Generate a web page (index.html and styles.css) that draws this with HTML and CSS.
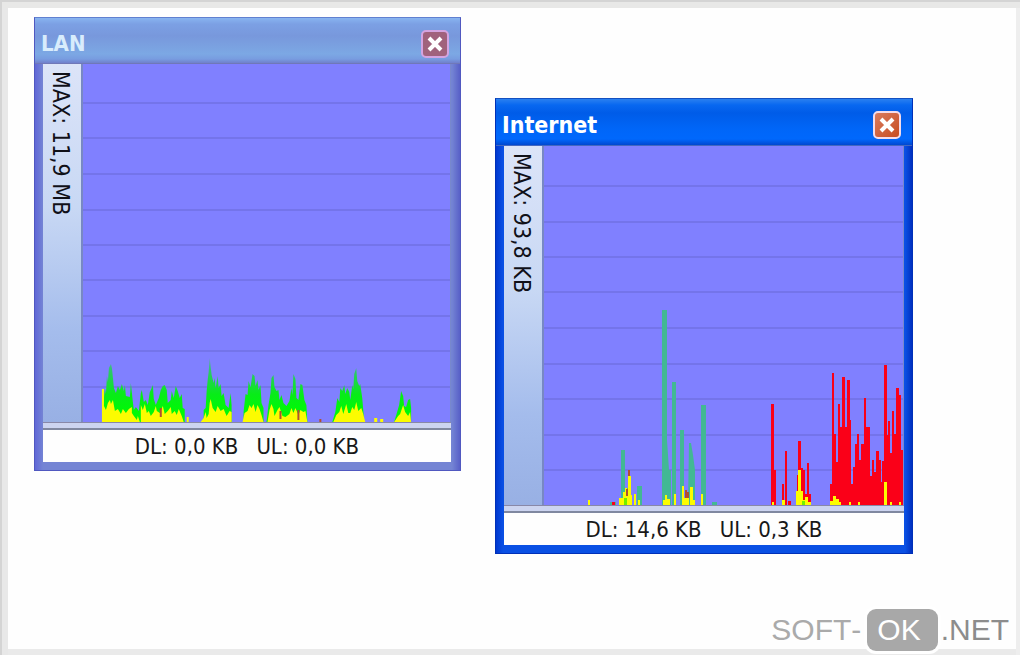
FILE: index.html
```
<!DOCTYPE html>
<html lang="en">
<head>
<meta charset="utf-8">
<title>Network traffic</title>
<link rel="stylesheet" href="styles.css">
</head>
<body>
<main class="desktop">
  <section class="window window-lan inactive" aria-label="LAN">
    <header class="titlebar">
      <h2 class="title">LAN</h2>
      <button class="close" type="button" aria-label="Close LAN">
        <svg viewBox="0 0 20 20" aria-hidden="true"><path d="M4 4L16 16M16 4L4 16"/></svg>
      </button>
    </header>
    <div class="monitor">
      <div class="scale">MAX: 11,9 MB</div>
      <svg class="chart" viewBox="83 64 368 358" preserveAspectRatio="none" role="img" aria-label="LAN traffic graph">
        <defs>
          <linearGradient id="lan-green" gradientUnits="userSpaceOnUse" x1="0" y1="358" x2="0" y2="410">
            <stop offset="0" stop-color="#64a0b4"/><stop offset=".25" stop-color="#2cc868"/><stop offset=".7" stop-color="#08ec18"/><stop offset="1" stop-color="#00f808"/>
          </linearGradient>
        </defs>
        <path class="grid" d="M83 103H451M83 138H451M83 174H451M83 210H451M83 245H451M83 280H451M83 316H451M83 351H451M83 387H451"/>
        <path fill="url(#lan-green)" d="M103 422V408L105 388L106 394L107 376L108 382L109 368L111 364L112 368L114 388L116 393L118 386L120 390L122 384L124 391L125 385L126 396L130 397L131 383L133 402L134 410L136 407L139 411L141 393L142 390L144 402L146 400L148 405L150 392L151 390L153 385L154 399L156 405L159 398L161 390L163 386L165 385L167 390L168 403L171 400L172 391L174 398L176 386L178 391L180 398L182 394L183 408L185 409V422Z
          M204 422V410L206 408L207 391L208 380L209 372L210 358L212 375L214 383L215 378L216 388L218 376L219 388L221 384L222 396L224 393L226 405L229 408L231 393L232 405V422Z
          M244 422V412L246 394L248 395L249 381L251 387L253 374L255 376L256 386L258 380L259 390L261 385L262 403L264 408V422Z
          M267 422L269 405L271 393L272 378L274 375L275 387L277 391L279 390L280 400L282 395L284 403L287 406L290 401L292 388L293 395L294 374L296 379L297 398L299 400L301 384L303 385L305 400L307 405L308 422Z
          M333 422L336 412L338 398L340 402L341 388L343 391L345 385L346 394L348 388L350 392L351 400L353 385L354 389L355 374L357 368L358 381L360 386L361 384L363 398L364 410L365 422Z
          M395 422L398 412L400 405L402 391L404 396L405 406L407 407L409 400L411 399L412 408V422Z"/>
        <path class="both" d="M102 422V389H104V406L106 410L108 403L110 400L111 404L113 400L115 411L118 409L121 414L123 409L126 413L129 409L132 407V413L134 416L137 420L138 416L140 422Z
          M141 422V405L143 410L145 404L147 413L149 411L151 416L154 412L156 406L157 411L160 413L163 406L165 414L168 411L171 407L172 414L175 411L177 415L179 409L182 416L184 422Z
          M187 422V417H189V422Z
          M201 422L204 418L206 412L207 418L209 414L210 403L211 399L213 408L216 412L218 406L221 411L224 409L227 416L230 411L232 412V422Z
          M243 422L245 413L248 411L250 405L252 408L254 404L256 412L258 405L260 409L262 415L264 422Z
          M268 422L270 410L272 404L274 409L275 416L278 410L280 407L283 416L286 417L290 414L292 408L294 413L296 408L299 415L301 410L304 412L306 411L308 422Z
          M334 422L337 415L340 412L342 406L344 414L347 404L349 413L351 413L353 407L355 410L357 402L359 411L362 408L364 414L366 422Z
          M375 422V418H378V422Z M381 422V419H384V422Z
          M395 422L399 416L401 414L404 405L406 412L409 416L411 412L412 422Z"/>
        <path class="stray" d="M161 417V408M281 419V411M299 420V410M321 422V419"/>
      </svg>
    </div>
    <footer class="status"><span>DL: 0,0 KB</span><span>UL: 0,0 KB</span></footer>
  </section>

  <section class="window window-internet" aria-label="Internet">
    <header class="titlebar">
      <h2 class="title">Internet</h2>
      <button class="close" type="button" aria-label="Close Internet">
        <svg viewBox="0 0 20 20" aria-hidden="true"><path d="M4 4L16 16M16 4L4 16"/></svg>
      </button>
    </header>
    <div class="monitor">
      <div class="scale">MAX: 93,8 KB</div>
      <svg class="chart" viewBox="544 146 359 359" preserveAspectRatio="none" role="img" aria-label="Internet traffic graph">
        <path class="grid" d="M544 186H904M544 222H904M544 257H904M544 292H904M544 328H904M544 364H904M544 399H904M544 435H904M544 470H904"/>
        <path class="down" d="M621 505V450H625V488H628V505Z M637 505V486H642V505Z M662 505V310H667V440L669 470H671V505Z M672 505V382H676V505Z M680 505V430H684V505Z M688 505L689 443H691L693 455L695 470V505Z M701 505V405H706V505Z M610 505V502H616V505Z M712 505V502H717V505Z"/>
        <path class="up" d="M771 505V404H774V470H776V505Z M782 505V484H784V505Z M785 505V451H787V505Z M788 505V501H791V505Z
          M797 505V475H798V441H801V468H803V505Z M803 505V470H805V494H807V463H809V494H811V505Z
          M830 505V484H832V373H834V434H836V462H838V404H840V427H842V377H845V427H847V380H850V420H851V484H853V467H855V444H857V434H859V460H861V444H864V398H866V427H870V476H872V460H874V472H876V451H879V460H881V482H882V461H884V365H887V435H888V421H890V453H892V411H894V434H896V388H899V395H901V450H903V505Z M612 505V502H615V505Z"/>
        <path class="both" d="M588 505V500H590V505Z M619 505V498H623V492H625V488H627V496H628V476H631V495H632V505Z M634 505V494H636V505Z M638 505V500H640V505Z
          M663 505V500H665V495H667V499H670V505Z M674 505V494H676V505Z M682 505V486H684V498H689V505Z M690 505V487H693V500H695V505Z M701 505V494H703V505Z
          M772 505V502H774V505Z M782 505V500H785V505Z M796 505V491H798V470H801V491H803V500H805V497H808V502H811V505Z
          M830 505V501H833V496H836V499H839V502H841V505Z M849 505V502H851V505Z M858 505V502H860V505Z M884 505V482H887V505Z M890 505V502H892V505Z M899 505V502H901V505Z"/>
        <path class="stray" d="M629 476V470M627 496V489M686 498V490M688 498V492"/>
        <path class="bright" d="M624 505V498H627V505Z M802 505V501H805V505Z"/>
      </svg>
    </div>
    <footer class="status"><span>DL: 14,6 KB</span><span>UL: 0,3 KB</span></footer>
  </section>

  <a class="brand" href="#"><span>SOFT-</span><span class="brand-pill">OK</span><span class="brand-end">.NET</span></a>
</main>
</body>
</html>
```
FILE: styles.css
```
* { box-sizing: border-box; }

body {
  margin: 0;
  font-family: "DejaVu Sans Condensed", "Noto Sans", sans-serif;
}

.desktop {
  position: relative;
  min-height: 100vh;
  background: #fefefe;
  box-shadow: inset 0 2px #d4d4d4, inset 2px 0 #d4d4d4, inset 0 8px #e8e8e7, inset 8px 0 #e8e8e8, inset -4px 0 #eeeeee, inset 0 -6px #eaeaea;
}

.window {
  position: absolute;
  display: flex;
  flex-direction: column;
  border: 1px solid #0030b8;
  border-top-color: #1450c0;
  background: linear-gradient(to right, #0038d0, #0a50e4 7px, #0a50e4 calc(100% - 7px), #0030c0);
}

.window-lan { left: 34px; top: 17px; width: 427px; }
.window-internet { left: 495px; top: 98px; width: 418px; padding: 0 8px 8px; }

.window.inactive {
  padding: 0 9px 8px 8px;
  border-color: #5058c0;
  border-top-color: #6080d0;
  background: linear-gradient(to right, #6068d8, #7484d4 8px, #7484d4 calc(100% - 8px), #5860c8);
}

.titlebar {
  display: flex;
  align-items: center;
  justify-content: space-between;
  height: 47px;
  margin: 0 -8px;
  padding: 6px 11px 0 6px;
  background: linear-gradient(#2a80f0, #0868f0 6px, #005ce8 14px, #0066f8 30px, #0068fc 40px, #0048d0);
  border-bottom: 1px solid #4468c0;
}

.inactive .titlebar {
  height: 46px;
  margin: 0 -9px 0 -8px;
  background: linear-gradient(#88b4f0, #7ca0e4 6px, #7898dc 18px, #7ca8e4 36px, #789ce0 41px, #7080cc);
  border-bottom-color: #7078b8;
}

.title {
  margin: 0;
  color: #ffffff;
  font-size: 23px;
  line-height: 28px;
  font-weight: bold;
}

.inactive .title {
  color: #d8ecfc;
  font-size: 22px;
}

.close {
  width: 28px;
  height: 28px;
  padding: 2px;
  border: 2px solid #f4dcea;
  border-radius: 5px;
  background: linear-gradient(135deg, #d87c60, #c84c20);
}

.close svg {
  display: block;
  width: 100%;
  height: 100%;
  fill: none;
  stroke: #ffffff;
  stroke-width: 4;
}

.inactive .close {
  border-color: #d4a4e0;
  background: #a0627c;
}

.monitor {
  display: flex;
  border-bottom: 1px solid #8888a8;
  background: #8080ff;
}

.scale {
  flex: none;
  width: 40px;
  padding: 7px 0;
  border-right: 2px solid #7888c4;
  background: linear-gradient(#dce4f8, #c8d8f4 40%, #a4bcec 75%, #98b0e4);
  color: #101018;
  font-size: 23px;
  line-height: 40px;
  writing-mode: vertical-rl;
}

.chart {
  display: block;
  flex: 1;
  min-width: 0;
  height: 359px;
  border-right: 1px solid #7888cc;
}

.inactive .chart { height: 358px; }

.grid { fill: none; stroke: #7474ea; stroke-width: 2; }
.down { fill: #42b894; }
.up { fill: #fa0018; }
.both { fill: #fcfc00; }
.bright { fill: #70f000; }
.stray { fill: none; stroke: #b05030; stroke-width: 2; }

.status {
  display: flex;
  justify-content: center;
  gap: 18px;
  height: 39px;
  border-top: 5px solid #ccd4f0;
  background: #fefefe;
  box-shadow: inset 0 2px #8088a0;
  color: #181818;
  font-size: 22px;
  line-height: 38px;
}

.brand {
  position: absolute;
  right: 11px;
  bottom: 4px;
  display: flex;
  align-items: center;
  color: #aaaaaa;
  font-family: "Liberation Sans", sans-serif;
  font-size: 30px;
  font-kerning: none;
  line-height: 42px;
  text-decoration: none;
}

.brand-pill {
  margin: 0 3px 0 6px;
  padding: 0 17px 0 10px;
  border-radius: 9px;
  background: #a8a8a8;
  box-shadow: 0 0 0 3px #ffffff;
  color: #ffffff;
}

.brand-end { color: #8c8c8c; }
```
